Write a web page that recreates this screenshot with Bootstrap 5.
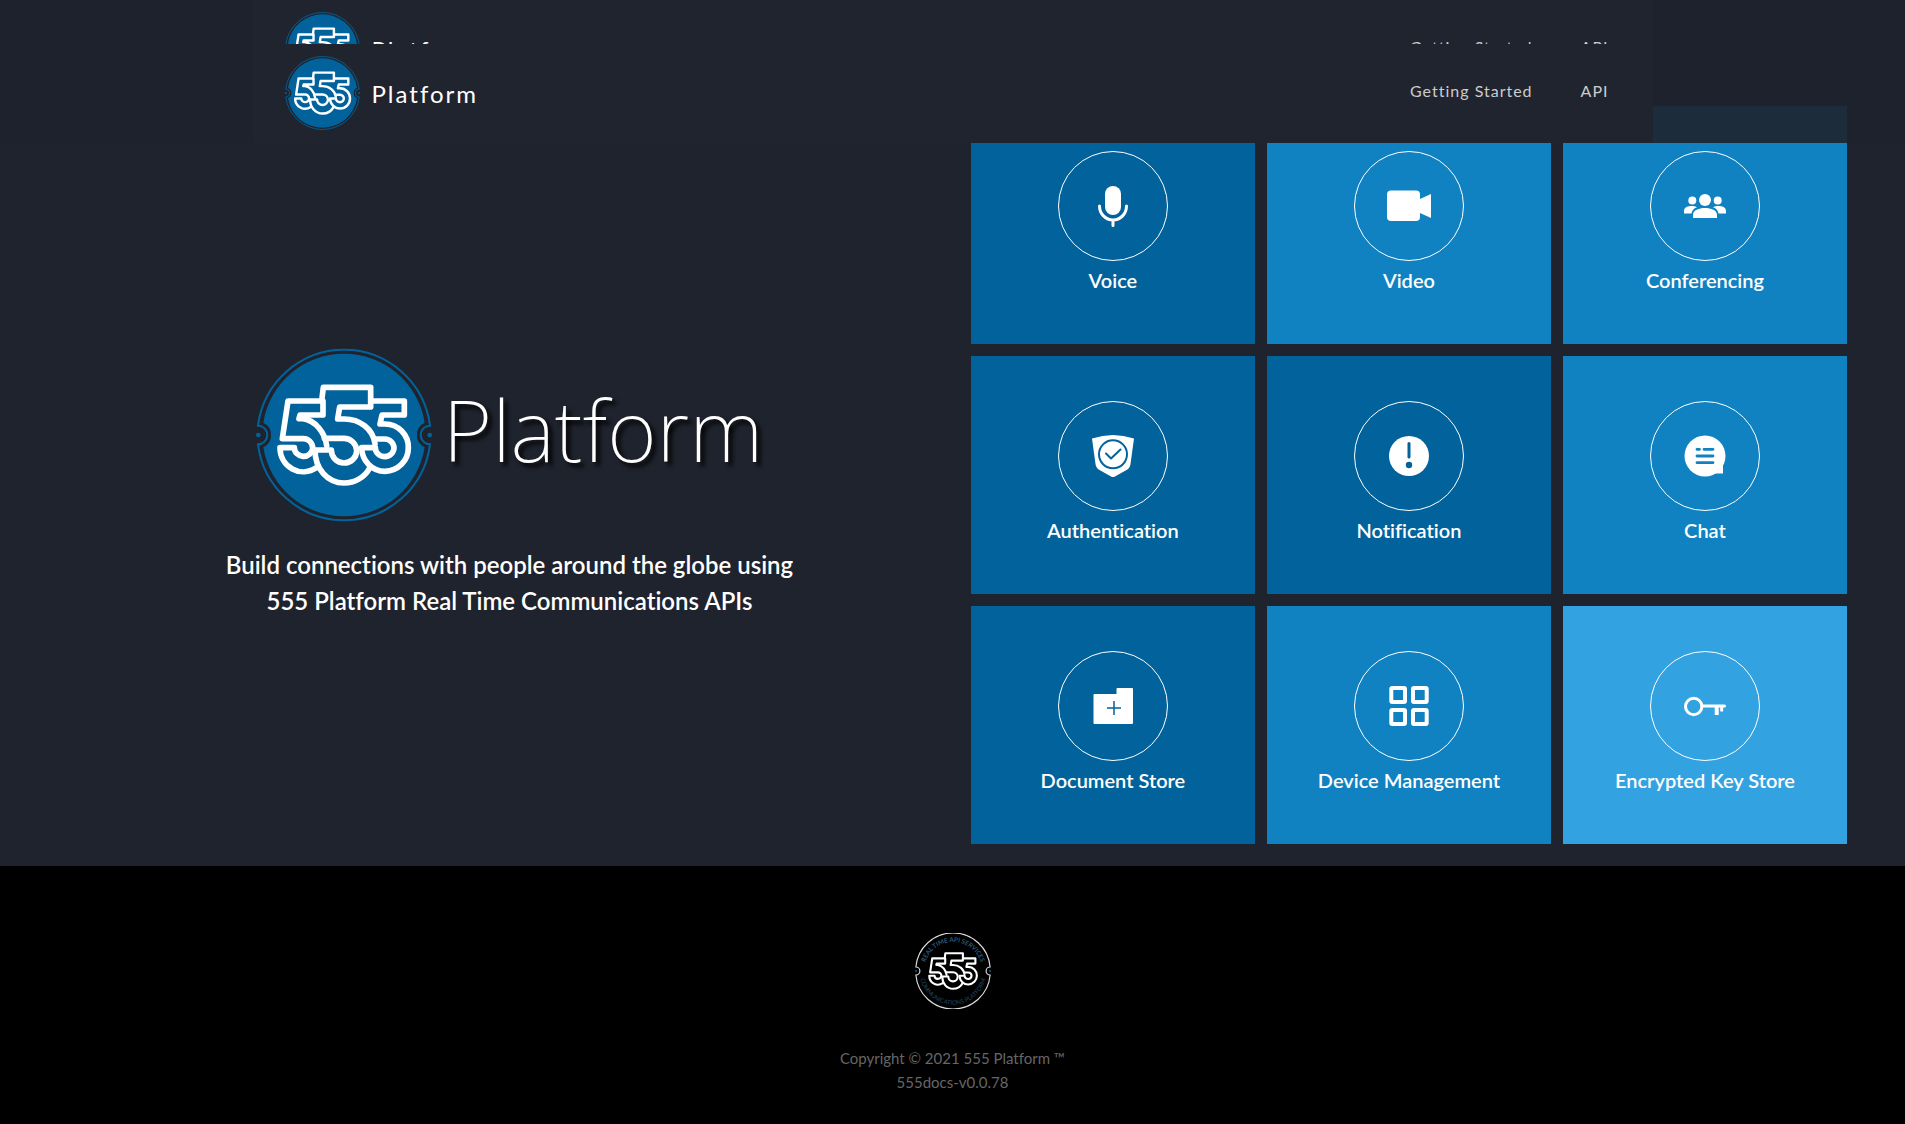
<!DOCTYPE html>
<html lang="en">
<head>
<meta charset="utf-8">
<meta name="viewport" content="width=device-width, initial-scale=1">
<title>555 Platform</title>
<link href="https://cdn.jsdelivr.net/npm/bootstrap@5.3.0/dist/css/bootstrap.min.css" rel="stylesheet">
<style>
  body { background: #1f232d; color: #fff; font-family: Lato, "Noto Sans", sans-serif; font-variant-ligatures: none; }
  a { color: inherit; text-decoration: none; }
  .page { min-height: 100vh; }
  .site-head { background: rgba(30, 34, 44, .9); z-index: 10; }
  .site-head-pinned { top: 44px; z-index: 20; }
  .head-inner { max-width: 1400px; background: #20242e; padding: 11px 20px 12px 32px; }
  .head-logo { width: 75px; height: 76px; }
  .brand-name { font-size: 24px; letter-spacing: 2px; line-height: 36px; padding-top: 2px; }
  .head-link { font-size: 16px; letter-spacing: 1px; color: #ccc; padding: 0 24px 5px; }
  .hero { padding: 106px 58px 22px 48px; }
  .hero-logo { width: 176px; height: 176px; }
  .hero-name { font: 200 85px/100px "Noto Sans", sans-serif; text-shadow: 4px 4px 4px #000; padding: 0 0 12px 3px; }
  .hero-text { font-size: 24px; font-weight: 600; line-height: 36px; }
  .tiles { width: 48.7%; display: grid; grid-template-columns: repeat(3, 1fr); gap: 12px; }
  .tile { padding: 45px 0; font-size: 20px; font-weight: 600; line-height: 38px; }
  .tile-deep { background: #02639c; }
  .tile-mid { background: #1082c1; }
  .tile-light { background: #33a2e1; }
  .ring { width: 110px; height: 110px; border: 1px solid #fff; }
  .ring svg { width: 44px; height: 44px; }
  .foot { background: #000; color: #666; font-size: 15px; line-height: 24px; padding: 67px 0 29px; }
  .foot-logo { width: 76px; height: 76px; margin-bottom: 37px; }
  @media (max-width: 1199px) {
    .hero { flex-direction: column; gap: 40px; padding: 160px 24px 24px; }
    .tiles { width: 100%; }
  }
</style>
</head>
<body>
<svg class="d-none" aria-hidden="true">
  <symbol id="digits" viewBox="18 22 526 528">
    <g fill="none" stroke="#fff" stroke-width="17" stroke-linejoin="round" stroke-linecap="round">
      <path d="M218 184V226H149L146 237H158C196 242 224 280 229 318M214 184H113L96 297H158A28 28 0 0 1 187 325A28 26 0 0 1 158 350A28 26 0 0 1 132 324H89A70 72 0 0 0 198 384"/>
      <path d="M214 184L219 143H361V202H268L262 238H282C328 238 368 268 374 312M222 296H281A38 38 0 0 1 319 333A38 37 0 0 1 281 370A38 39 0 0 1 243 331H194C194 388 232 430 281 430C314 430 344 412 358 385"/>
      <path d="M368 184H462V226H395L389 253H404A70 70 0 0 1 474 325A72 70 0 0 1 404 395A70 72 0 0 1 334 324H375A29 26 0 0 0 404 351A28 27 0 0 0 431 325A28 28 0 0 0 404 298H376"/>
    </g>
  </symbol>
  <symbol id="logo" viewBox="18 22 526 528">
    <path fill="none" stroke="#02639c" stroke-width="6" d="M23 258A260 260 0 0 1 539 258A28 28 0 0 0 539 314A260 260 0 0 1 23 314A28 28 0 0 0 23 258Z"/>
    <path fill="#02639c" d="M39 249A245 245 0 0 1 523 249A41 41 0 0 0 523 323A245 245 0 0 1 39 323A41 41 0 0 0 39 249Z"/>
    <g fill="#02639c"><circle cx="24" cy="286" r="7"/><circle cx="538" cy="286" r="7"/></g>
    <use href="#digits" x="18" y="22" width="526" height="528"/>
  </symbol>
</svg>

<div class="page d-flex flex-column position-relative">
  <header class="site-head position-absolute top-0 start-0 w-100">
    <div class="head-inner mx-auto d-flex align-items-center">
      <a href="#" class="d-flex align-items-center gap-2 me-auto">
        <svg class="head-logo" aria-hidden="true"><use href="#logo"/></svg>
        <span class="brand-name ps-1">Platform</span>
      </a>
      <nav class="d-flex"><a class="head-link" href="#">Getting Started</a><a class="head-link" href="#">API</a></nav>
    </div>
  </header>
  <header class="site-head site-head-pinned position-absolute start-0 w-100">
    <div class="head-inner mx-auto d-flex align-items-center">
      <a href="#" class="d-flex align-items-center gap-2 me-auto">
        <svg class="head-logo" aria-hidden="true"><use href="#logo"/></svg>
        <span class="brand-name ps-1">Platform</span>
      </a>
      <nav class="d-flex"><a class="head-link" href="#">Getting Started</a><a class="head-link" href="#">API</a></nav>
    </div>
  </header>

  <main class="hero d-flex align-items-center">
    <section class="flex-fill text-center pt-3">
      <div class="d-flex justify-content-center align-items-center gap-2 mb-4">
        <svg class="hero-logo" aria-hidden="true"><use href="#logo"/></svg>
        <h1 class="hero-name mb-0">Platform</h1>
      </div>
      <p class="hero-text mb-0">Build connections with people around the globe using<br>555 Platform Real Time Communications APIs</p>
    </section>

    <section class="tiles text-center">
      <a class="tile tile-deep" href="#">
        <span class="ring rounded-circle mx-auto d-flex align-items-center justify-content-center"><svg viewBox="-22 -22 44 44"><rect x="-8" y="-20" width="16" height="29" rx="8" fill="#fff"/><path d="M-13.500 0A13.500 14 0 0 0 13.500 0M0 14V19.500" fill="none" stroke="#fff" stroke-width="3" stroke-linecap="round"/></svg></span>
        Voice</a>
      <a class="tile tile-mid" href="#">
        <span class="ring rounded-circle mx-auto d-flex align-items-center justify-content-center"><svg viewBox="-22 -22 44 44"><rect x="-22" y="-15.500" width="33" height="30.500" rx="4" fill="#fff"/><path d="M11-7L22-12V12L11 7Z" fill="#fff"/></svg></span>
        Video</a>
      <a class="tile tile-mid" href="#">
        <span class="ring rounded-circle mx-auto d-flex align-items-center justify-content-center"><svg viewBox="-22 -22 44 44" fill="#fff"><circle cy="-6" r="6"/><circle cx="-12.700" cy="-5.500" r="4"/><circle cx="12.700" cy="-5.500" r="4"/><path d="M-12 12V9C-12 4-6 2 0 2S12 4 12 9V12ZM-21 7.500V5C-21 1-17 0-13 0Q-10 0-8 1.300Q-13 3-13.500 7.500ZM21 7.500V5C21 1 17 0 13 0Q10 0 8 1.300Q13 3 13.500 7.500Z"/></svg></span>
        Conferencing</a>
      <a class="tile tile-deep" href="#">
        <span class="ring rounded-circle mx-auto d-flex align-items-center justify-content-center"><svg viewBox="-22 -22 44 44"><path d="M-21-17.500Q0-24.500 21-17.500L17.500 8Q17 12 13.500 14L2 20.500Q0 21.500-2 20.500L-13.500 14Q-17 12-17.500 8Z" fill="#fff"/><g fill="none" stroke="#02639c" stroke-width="2" stroke-linecap="round" stroke-linejoin="round"><circle cy="-1.700" r="14"/><path d="M-7-2.500L-2 2.500L7.500-6.500"/></g></svg></span>
        Authentication</a>
      <a class="tile tile-deep" href="#">
        <span class="ring rounded-circle mx-auto d-flex align-items-center justify-content-center"><svg viewBox="-22 -22 44 44"><circle r="20" fill="#fff"/><path d="M0-12.500V1" stroke="#02639c" stroke-width="3" stroke-linecap="round"/><circle cy="9" r="3.200" fill="#02639c"/></svg></span>
        Notification</a>
      <a class="tile tile-mid" href="#">
        <span class="ring rounded-circle mx-auto d-flex align-items-center justify-content-center"><svg viewBox="-22 -22 44 44"><circle r="20.500" fill="#fff"/><path d="M18 6V17.500H8Z" fill="#fff"/><path d="M-8-6.700H-5.500M-1-6.700H8M-8 0H8M-8 6.700H8" stroke="#1082c1" stroke-width="2.800" stroke-linecap="round"/></svg></span>
        Chat</a>
      <a class="tile tile-deep" href="#">
        <span class="ring rounded-circle mx-auto d-flex align-items-center justify-content-center"><svg viewBox="-22 -22 44 44"><path d="M-18.500-12H3.500V-17Q3.500-18 4.500-18H19Q20 -18 20-17V17Q20 18 19 18H-18.500Q-19.500 18-19.500 17V-11Q-19.500-12-18.500-12Z" fill="#fff"/><path d="M1-5V9M-6 2H8" stroke="#02639c" stroke-width="1.500"/></svg></span>
        Document Store</a>
      <a class="tile tile-mid" href="#">
        <span class="ring rounded-circle mx-auto d-flex align-items-center justify-content-center"><svg viewBox="-22 -22 44 44" fill="none" stroke="#fff" stroke-width="4"><rect x="-17.700" y="-18" width="13.700" height="14" rx="1"/><rect x="4" y="-18" width="13.700" height="14" rx="1"/><rect x="-17.700" y="4" width="13.700" height="14" rx="1"/><rect x="4" y="4" width="13.700" height="14" rx="1"/></svg></span>
        Device Management</a>
      <a class="tile tile-light" href="#">
        <span class="ring rounded-circle mx-auto d-flex align-items-center justify-content-center"><svg viewBox="-22 -22 44 44" fill="none" stroke="#fff" stroke-width="3"><circle cx="-11.300" cy=".5" r="8.200"/><path d="M-3 0H19.500" stroke-linecap="round"/><path d="M11.700 0V9" stroke-width="4"/><path d="M16.700 0V5.500"/></svg></span>
        Encrypted Key Store</a>
    </section>
  </main>

  <footer class="foot text-center flex-grow-1">
    <svg class="foot-logo" viewBox="18 22 526 528" role="img" aria-label="555 Platform seal">
      <path fill="none" stroke="#ddd" stroke-width="8" d="M23 258A259 259 0 0 1 539 258A28 28 0 0 0 539 314A259 259 0 0 1 23 314A28 28 0 0 0 23 258Z"/>
      <circle cx="24" cy="286" r="7" fill="#02639c"/><circle cx="538" cy="286" r="7" fill="#02639c"/>
      <path id="arcTop" fill="none" d="M79 286A202 202 0 0 1 483 286"/>
      <path id="arcLow" fill="none" d="M47 286A234 234 0 0 0 515 286"/>
      <text font-size="44" font-weight="700" fill="#2c5a78" text-anchor="middle"><textPath href="#arcTop" startOffset="50%">REAL TIME API SERVICES</textPath></text>
      <text font-size="42" fill="#24485f" text-anchor="middle"><textPath href="#arcLow" startOffset="50%">COMMUNICATIONS PLATFORM</textPath></text>
      <use href="#digits" x="55" y="59" width="452" height="454"/>
    </svg>
    <div>Copyright © 2021 555 Platform ™</div>
    <div>555docs-v0.0.78</div>
  </footer>
</div>
<script src="https://cdn.jsdelivr.net/npm/bootstrap@5.3.0/dist/js/bootstrap.bundle.min.js"></script>
</body>
</html>
